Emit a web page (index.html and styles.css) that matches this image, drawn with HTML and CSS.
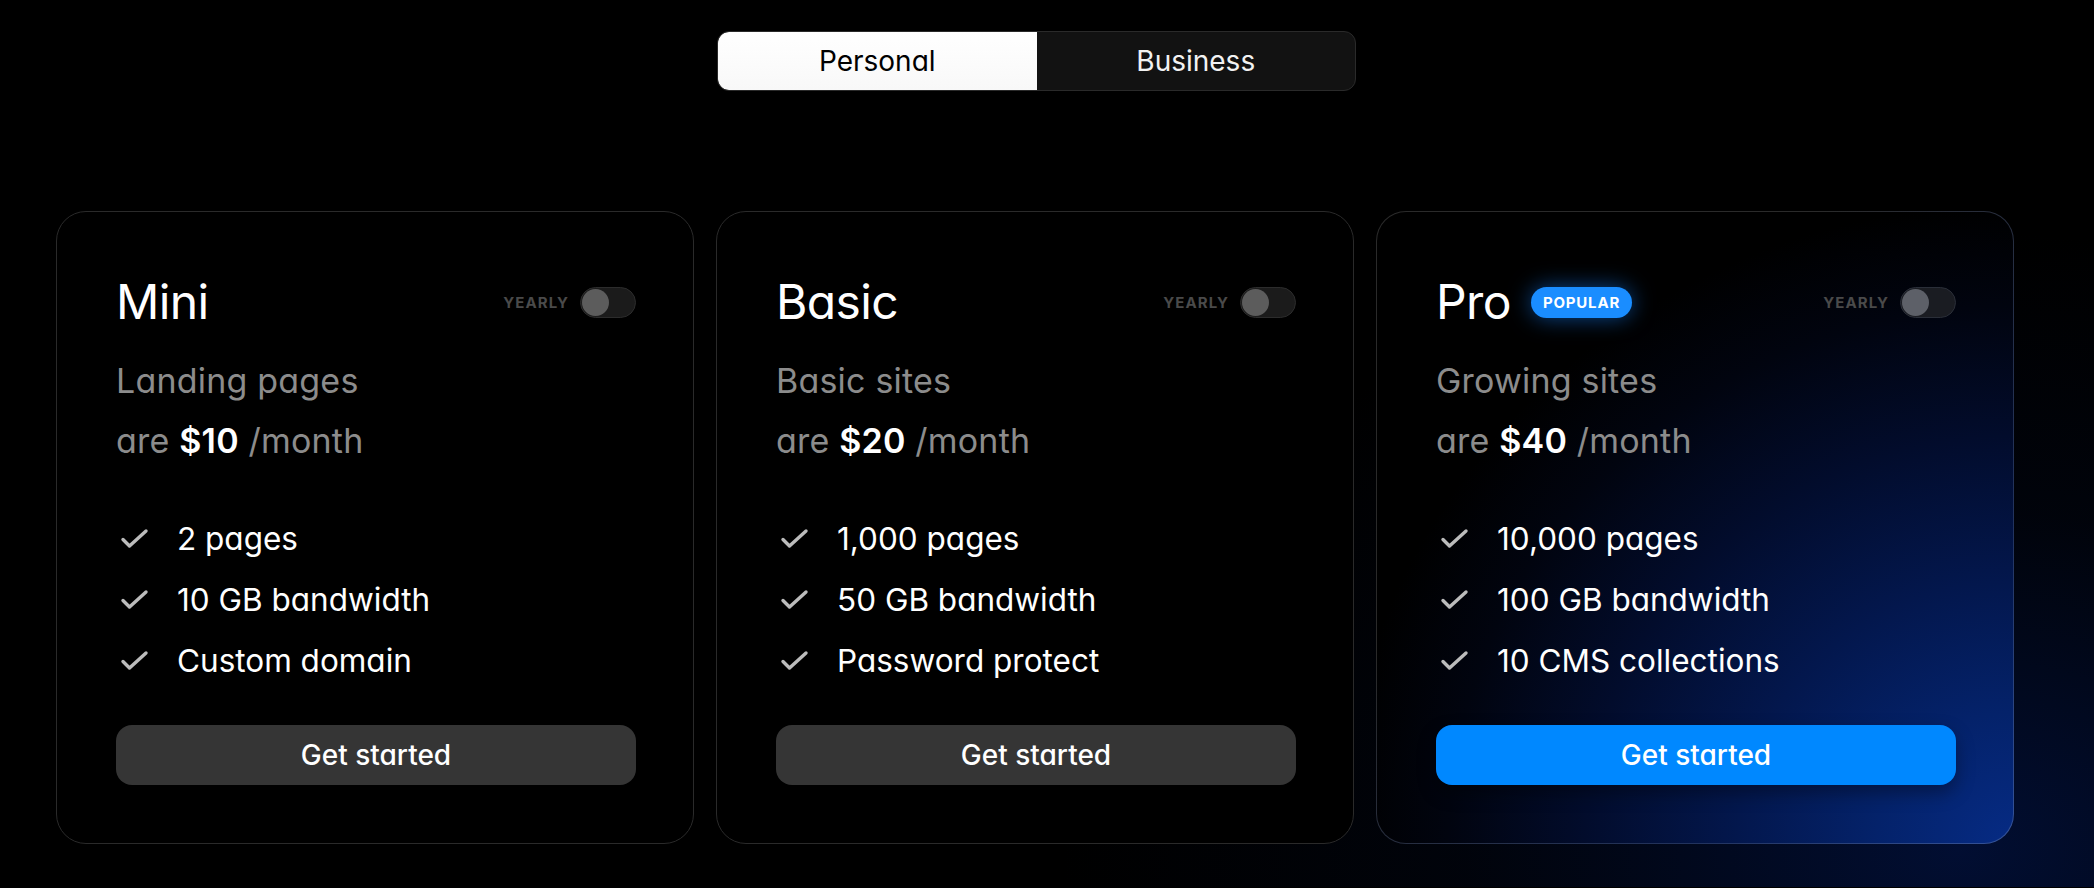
FILE: index.html
```html
<!DOCTYPE html>
<html>
<head>
	<meta charset="UTF-8">
	<title>Pricing</title>
	<link rel="stylesheet" href="styles.css">
</head>
<body>
	<div class="switcher">
		<button class="tab active">Personal</button>
		<button class="tab">Business</button>
	</div>

	<section class="plans">
		<div class="card">
			<div class="card-head">
				<h2>Mini</h2>
				<div class="yearly">
					<span>YEARLY</span>
					<span class="switch"><span class="knob"></span></span>
				</div>
			</div>
			<p class="price">Landing pages<br>are <b>$10</b> /month</p>
			<ul class="features">
				<li><svg viewBox="0 0 36 36"><path d="M7 18.5l6.5 6.5L30 10"/></svg>2 pages</li>
				<li><svg viewBox="0 0 36 36"><path d="M7 18.5l6.5 6.5L30 10"/></svg>10 GB bandwidth</li>
				<li><svg viewBox="0 0 36 36"><path d="M7 18.5l6.5 6.5L30 10"/></svg>Custom domain</li>
			</ul>
			<button class="start">Get started</button>
		</div>

		<div class="card">
			<div class="card-head">
				<h2>Basic</h2>
				<div class="yearly">
					<span>YEARLY</span>
					<span class="switch"><span class="knob"></span></span>
				</div>
			</div>
			<p class="price">Basic sites<br>are <b>$20</b> /month</p>
			<ul class="features">
				<li><svg viewBox="0 0 36 36"><path d="M7 18.5l6.5 6.5L30 10"/></svg>1,000 pages</li>
				<li><svg viewBox="0 0 36 36"><path d="M7 18.5l6.5 6.5L30 10"/></svg>50 GB bandwidth</li>
				<li><svg viewBox="0 0 36 36"><path d="M7 18.5l6.5 6.5L30 10"/></svg>Password protect</li>
			</ul>
			<button class="start">Get started</button>
		</div>

		<div class="card pro">
			<div class="card-head">
				<h2>Pro <span class="badge">POPULAR</span></h2>
				<div class="yearly">
					<span>YEARLY</span>
					<span class="switch"><span class="knob"></span></span>
				</div>
			</div>
			<p class="price">Growing sites<br>are <b>$40</b> /month</p>
			<ul class="features">
				<li><svg viewBox="0 0 36 36"><path d="M7 18.5l6.5 6.5L30 10"/></svg>10,000 pages</li>
				<li><svg viewBox="0 0 36 36"><path d="M7 18.5l6.5 6.5L30 10"/></svg>100 GB bandwidth</li>
				<li><svg viewBox="0 0 36 36"><path d="M7 18.5l6.5 6.5L30 10"/></svg>10 CMS collections</li>
			</ul>
			<button class="start blue">Get started</button>
		</div>
	</section>
</body>
</html>
```

FILE: styles.css
```css
* {
	box-sizing: border-box;
}
body {
	margin: 0;
	padding: 31px 0 0;
	width: 2094px;
	height: 888px;
	overflow: hidden;
	background: #000;
	color: #fff;
	font-family: 'Inter', 'Liberation Sans', sans-serif;
	font-feature-settings: "cv11";
}
.switcher {
	display: flex;
	width: 639px;
	height: 60px;
	margin: 0 0 0 717px;
	border: 1px solid #2a2a2a;
	border-radius: 12px;
	background: #121212;
	overflow: hidden;
}
.tab {
	flex: 1;
	border: none;
	background: transparent;
	color: #f2f2f2;
	font-family: inherit;
	font-feature-settings: "cv11";
	font-size: 28px;
	font-weight: 400;
}
.tab.active {
	background: linear-gradient(#fff, #f8f8f8);
	color: #000;
	border-radius: 11px 0 0 11px;
}
.plans {
	display: flex;
	gap: 22px;
	margin-top: 120px;
	padding: 0 0 43px 56px;
	background: radial-gradient(900px 620px at 1960px 640px, rgba(3, 28, 100, .5), rgba(3, 18, 60, .18) 55%, transparent 100%);
}
.card {
	width: 638px;
	height: 633px;
	padding: 61px 57px 58px 59px;
	border: 1px solid #2a2a2a;
	border-radius: 30px;
	background: #000;
	display: flex;
	flex-direction: column;
}
.card.pro {
	border-color: transparent;
	background:
		radial-gradient(120% 115% at 100% 100%, #062b84 0%, #04226a 18%, #03174d 36%, #020c2c 56%, #01040f 74%, #000 88%) padding-box,
		linear-gradient(135deg, #2a2a2a 35%, #22335e 75%, #34539a 100%) border-box;
}
.card-head {
	display: flex;
	align-items: center;
	justify-content: space-between;
	height: 58px;
}
h2 {
	margin: 0;
	font-size: 48px;
	font-weight: 400;
	line-height: 58px;
	display: flex;
	align-items: center;
	letter-spacing: -.6px;
}
.badge {
	margin-left: 20px;
	padding: 0 12px;
	height: 31px;
	line-height: 31px;
	border-radius: 16px;
	background: #1a8dff;
	box-shadow: 0 0 22px rgba(20, 130, 255, .55);
	font-size: 15px;
	font-weight: 700;
	letter-spacing: .8px;
}
.yearly {
	display: flex;
	align-items: center;
	gap: 11px;
	font-size: 15px;
	font-weight: 700;
	letter-spacing: 1.1px;
	color: #4a4a4a;
}
.switch {
	width: 56px;
	height: 31px;
	border-radius: 16px;
	background: #1b1b1b;
	border: 1px solid #2c2c2c;
	padding: 1px;
}
.knob {
	display: block;
	width: 27px;
	height: 27px;
	border-radius: 50%;
	background: #5c5c5c;
}
.pro .switch {
	background: #1a1c22;
	border-color: #2a2e38;
}
.pro .knob {
	background: #5d6068;
}
.price {
	margin: 20px 0 0;
	font-size: 34px;
	line-height: 60px;
	letter-spacing: .2px;
	color: #8c8c8c;
}
.price b {
	color: #fff;
	font-weight: 600;
}
.features {
	list-style: none;
	margin: 37px 0 0;
	padding: 0;
	font-size: 31.5px;
	line-height: 61px;
}
.features li {
	display: flex;
	align-items: center;
	gap: 25px;
}
.features svg {
	width: 36px;
	height: 36px;
	fill: none;
	stroke: #bcbcbc;
	stroke-width: 3.4;
	stroke-linecap: round;
	stroke-linejoin: round;
}
.start {
	margin-top: auto;
	height: 60px;
	border: none;
	border-radius: 16px;
	background: #353535;
	color: #fff;
	font-family: inherit;
	font-feature-settings: "cv11";
	font-size: 28px;
	font-weight: 500;
}
.start.blue {
	background: #0088ff;
	box-shadow: 0 8px 18px rgba(0, 0, 0, .35);
}
```
